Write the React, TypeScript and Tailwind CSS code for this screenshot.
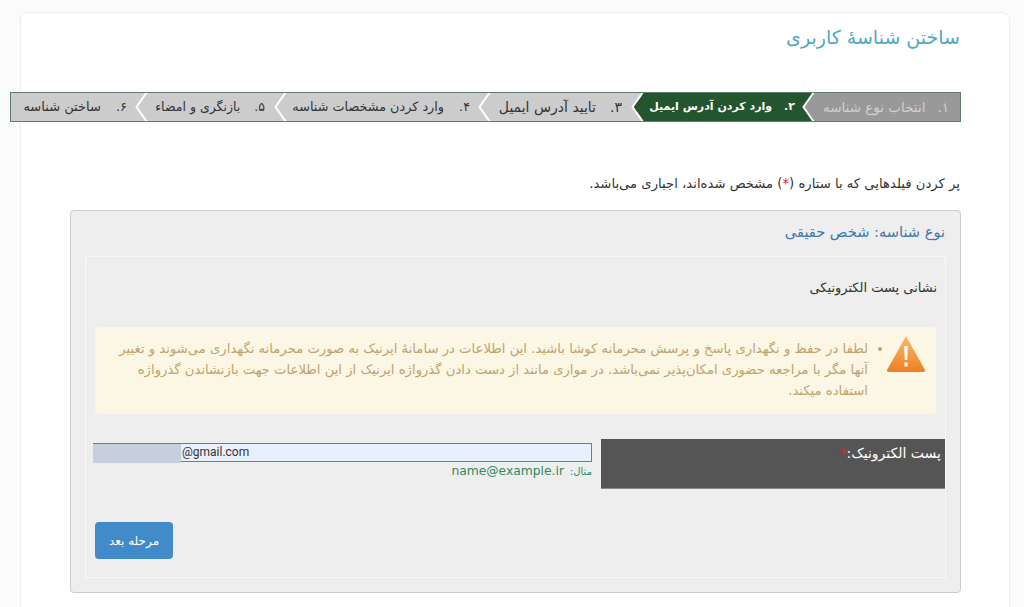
const FONT = "font-['DejaVu_Sans',sans-serif]"

const STEPS = [
  { num: '۱.', label: 'انتخاب نوع شناسه', box: 'w-[147px] pr-[11px] gap-[12px] text-[13.5px] bg-[#999999] text-[#d0d0d0]', tip: 'fill-[#999999]', z: 'z-[6]' },
  { num: '۲.', label: 'وارد کردن آدرس ایمیل', box: 'w-[171px] pr-[18px] gap-[12px] text-[11px] font-bold bg-[#23552f] text-white', tip: 'fill-[#23552f]', z: 'z-[5]' },
  { num: '۳.', label: 'تایید آدرس ایمیل', box: 'w-[153px] pr-[20px] gap-[14px] text-[14px] bg-[#cccccc] text-[#333333]', tip: 'fill-[#cccccc]', z: 'z-[4]' },
  { num: '۴.', label: 'وارد کردن مشخصات شناسه', box: 'w-[204px] pr-[19px] gap-[15px] text-[12.8px] bg-[#cccccc] text-[#333333]', tip: 'fill-[#cccccc]', z: 'z-[3]' },
  { num: '۵.', label: 'بازنگری و امضاء', box: 'w-[139px] pr-[20px] gap-[14px] text-[12.5px] bg-[#cccccc] text-[#333333]', tip: 'fill-[#cccccc]', z: 'z-[2]' },
  { num: '۶.', label: 'ساختن شناسه', box: 'w-[135px] pr-[19px] gap-[15px] text-[13px] bg-[#cccccc] text-[#333333]', tip: '', z: 'z-[1]' },
]

function StepTip({ fill }: { fill: string }) {
  return (
    <svg width="13" height="28" viewBox="0 0 13 28" className="absolute top-0 -left-[11px]">
      <path d="M13 0 L2 14 L13 28 Z" className={fill} />
      <path d="M12 -1 L1.5 14 L12 29" fill="none" stroke="#fff" strokeWidth="2" />
    </svg>
  )
}

function WarningIcon() {
  return (
    <svg width="40" height="38" viewBox="0 0 40 38" className="shrink-0">
      <defs>
        <linearGradient id="warn" x1="0" y1="0" x2="0" y2="1">
          <stop offset="0" stopColor="#f9b96e" />
          <stop offset="1" stopColor="#ee7f22" />
        </linearGradient>
      </defs>
      <path d="M20 1 L39 35 Q39.5 37 37.5 37 L2.5 37 Q0.5 37 1 35 Z" fill="url(#warn)" />
      <path d="M18.2 11 L21.8 11 L21.2 25 L18.8 25 Z" fill="#fff" />
      <rect x="18.4" y="27.5" width="3.2" height="3.8" fill="#fff" />
    </svg>
  )
}

export default function App() {
  return (
    <div dir="rtl" className={`h-[607px] w-[1024px] overflow-hidden bg-[#fbfbfb] pt-3 pl-5 pr-[14px] ${FONT}`}>
      <div className="h-[640px] rounded-lg border border-[#eeeeee] bg-white pr-[48px]">
        <h1 className="mt-[11px] mr-px h-[27px] text-[19px] leading-[27px] font-normal text-[#4fa9bd]">ساختن شناسهٔ کاربری</h1>

        <div className="mt-[41px] flex h-[30px] w-[951px] border border-[#5f7f68] bg-white">
          {STEPS.map(s => (
            <div key={s.num} className={`relative flex h-full shrink-0 items-center whitespace-nowrap ${s.box} ${s.z}`}>
              <span>{s.num}</span>
              <span>{s.label}</span>
              {s.tip && <StepTip fill={s.tip} />}
            </div>
          ))}
        </div>

        <p className="mt-[53px] mr-px h-[18px] text-[13.2px] leading-[18px] text-[#333333]">
          پر کردن فیلدهایی که با ستاره (<span className="text-[#e02020]">*</span>) مشخص شده‌اند، اجباری می‌باشد.
        </p>

        <div className="mt-[17px] h-[383px] w-[891px] rounded border border-[#cccccc] bg-[#eeeeee] px-[14px] pt-[12px]">
          <div className="mr-px h-[18px] text-[14.6px] leading-[18px] text-[#3d78ad]">نوع شناسه: شخص حقیقی</div>

          <div className="mt-[15px] h-[322px] border border-[#f8f8f8] pt-[22px]">
            <div className="mr-[8px] h-[18px] text-[13px] leading-[18px] text-[#333333]">نشانی پست الکترونیکی</div>

            <div className="mt-[30px] mx-[9px] flex h-[87px] items-start rounded-sm bg-[#fcf7e4] pt-[8px] pr-[10px] pl-[18px]">
              <WarningIcon />
              <div className="relative flex-1 pt-[3px] pr-[18px] text-[13.2px] leading-[21px] text-[#c2a26d]">
                <span className="absolute top-[12px] right-[4px] h-1 w-1 rounded-full bg-[#c2a26d]" />
                لطفا در حفظ و نگهداری پاسخ و پرسش محرمانه کوشا باشید. این اطلاعات در سامانهٔ ایرنیک به صورت محرمانه نگهداری می‌شوند و تغییر آنها مگر با مراجعه حضوری امکان‌پذیر نمی‌باشد. در مواری مانند از دست دادن گذرواژه ایرنیک از این اطلاعات جهت بازنشاندن گذرواژه استفاده میکند.
              </div>
            </div>

            <div className="mt-[25px] flex items-start gap-[9px]">
              <div className="h-[50px] w-[344px] shrink-0 border-b border-[#888888] bg-[#555555] pt-[5px] pr-1 text-[14px] leading-[18px] text-white">
                پست الکترونیک:<span className="text-[#e02020]">*</span>
              </div>
              <div className="w-[499px] pt-1">
                <div dir="ltr" className="flex h-[19px] border-y border-r border-[#4f86b5] bg-[#e8f0fe] font-['Roboto',sans-serif] text-[12px] leading-[17px] text-[#333333]">
                  <span className="h-[19px] w-[88px] shrink-0 bg-[#c5d0dc]" />
                  <span className="pl-px">@gmail.com</span>
                </div>
                <div className="mt-[1px] flex items-baseline gap-[6px] text-[#2f8a62]">
                  <span className="text-[10px]">مثال:</span>
                  <span className="text-[12.3px] leading-[17px]">name@example.ir</span>
                </div>
              </div>
            </div>

            <div className="mt-[33px] ml-[9px] flex justify-end">
              <button className="h-[37px] w-[78px] rounded bg-[#428bca] text-[12px] text-white">مرحله بعد</button>
            </div>
          </div>
        </div>
      </div>
    </div>
  )
}
